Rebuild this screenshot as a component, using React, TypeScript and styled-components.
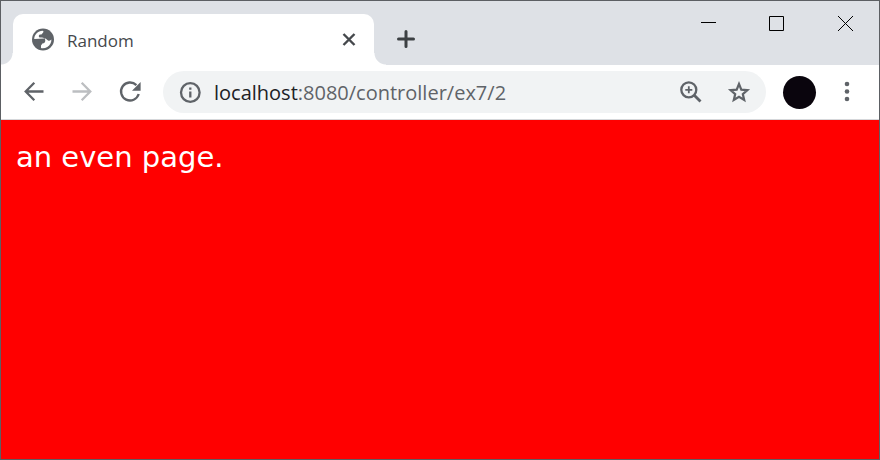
import React from "react";
import styled, { createGlobalStyle } from "styled-components";

const colors = {
  frame: "#5c5f63",
  strip: "#dee1e6",
  icon: "#5f6368",
  field: "#f1f3f4",
  ink: "#202124",
};

const GlobalStyle = createGlobalStyle`
  *, *::before, *::after { box-sizing: border-box; }
  body { margin: 0; font-family: "Open Sans", "Noto Sans", sans-serif; }
  button { border: 0; padding: 0; background: transparent; color: inherit; font: inherit; }
  svg { display: block; }
`;

const BrowserWindow = styled.div`
  display: flex;
  flex-direction: column;
  min-height: 100vh;
  border: 1px solid ${colors.frame};
  background: #fff;
`;

const TitleBar = styled.header`
  display: flex;
  align-items: flex-end;
  height: 64px;
  padding-left: 12px;
  background: ${colors.strip};
`;

const Tab = styled.div`
  position: relative;
  display: flex;
  align-items: center;
  flex: 0 1 361px;
  height: 51px;
  padding: 0 16px 0 18px;
  border-radius: 10px 10px 0 0;
  background: #fff;

  &::before,
  &::after {
    content: "";
    position: absolute;
    bottom: 0;
    width: 12px;
    height: 12px;
  }
  &::before {
    right: 100%;
    background: radial-gradient(circle at 0 0, transparent 11px, #fff 12px);
  }
  &::after {
    left: 100%;
    background: radial-gradient(circle at 100% 0, transparent 11px, #fff 12px);
  }
`;

const TabTitle = styled.span`
  flex: 1;
  margin-left: 12px;
  padding-top: 2px;
  font-size: 17px;
  line-height: 24px;
  color: #45484c;
`;

const IconButton = styled.button<{ $size: number; $tone?: string }>`
  display: flex;
  align-items: center;
  justify-content: center;
  flex: none;
  width: ${(p) => p.$size}px;
  height: ${(p) => p.$size}px;
  color: ${(p) => p.$tone ?? colors.icon};
`;

const NewTab = styled(IconButton)`
  margin: 0 0 10px 16px;
`;

const WindowControls = styled.div`
  display: flex;
  align-self: flex-start;
  margin-left: auto;
`;

const WindowButton = styled.button`
  display: flex;
  align-items: center;
  justify-content: center;
  width: 69px;
  height: 44px;
  padding-left: 2px;
  color: #000;
`;

const Toolbar = styled.nav`
  display: flex;
  align-items: center;
  height: 55px;
  padding: 0 16px 0 17px;
  border-bottom: 1px solid #d5d7da;
`;

const History = styled.div`
  display: flex;
  gap: 16px;
`;

const AddressBar = styled.div`
  display: flex;
  align-items: center;
  flex: 1;
  height: 42px;
  margin: 0 17px;
  padding: 0 11px;
  border-radius: 21px;
  background: ${colors.field};
`;

const Address = styled.a`
  flex: 1;
  margin-left: 8px;
  padding-top: 2px;
  font-size: 20px;
  line-height: 28px;
  color: ${colors.icon};
  text-decoration: none;
`;

const Host = styled.span`
  color: ${colors.ink};
`;

const AddressActions = styled.div`
  display: flex;
  gap: 16px;
`;

const Avatar = styled.button`
  flex: none;
  width: 33px;
  height: 33px;
  margin-right: 15px;
  border-radius: 50%;
  background: #0a050d;
`;

const Page = styled.main`
  flex: 1;
  padding: 17px 15px;
  background: #f00;
`;

const Message = styled.p`
  margin: 0;
  font-family: "DejaVu Sans", Verdana, sans-serif;
  font-size: 29px;
  line-height: 40px;
  color: #fff;
`;

const LineIcon = ({ children }: { children: React.ReactNode }) => (
  <svg
    width="26"
    height="26"
    viewBox="0 0 26 26"
    fill="none"
    stroke="currentColor"
    strokeWidth="2.3"
    aria-hidden="true"
  >
    {children}
  </svg>
);

const GlobeIcon = () => (
  <svg width="24" height="24" viewBox="0 0 24 24" aria-hidden="true">
    <circle cx="12" cy="11.500" r="11" fill={colors.icon} />
    <path
      fill="#fff"
      d="M3.200 10.900C3.400 6.500 6.900 3 11.500 2.700c1.100.2 1.200 1.200.6 1.900l-1 1.200c-.4.600-.9.800-1.600.8-1 0-1.700.7-1.700 1.600 0 .8.600 1.400 1.500 1.400h1.500c2 0 3.500 1.300 3.500 3 0 1.700-1.200 3-2.800 3-1 0-1.600.6-1.600 1.500v2.900c3.800.9 7.900-1 9.600-4.500.7-1.300.9-2.600.9-3.900-.9 1-2.200 1.300-3.300.8-.9-.4-1.300-1.100-1.900-1.500-.6-.4-1.500-.5-2.300-.4"
    />
    <path
      fill={colors.icon}
      d="M2.500 11.300H7c1.700 0 2.700.9 2.700 2.200 0 .7.300 1 .9 1.200.7.200.8.700.5 1.300-.5.800-1.200 1.200-1.200 2.200v2.600L5 19z"
    />
  </svg>
);

const BackIcon = () => (
  <LineIcon>
    <path d="M22.500 12.500H5M13.300 3.800L4.700 12.500l8.600 8.700" />
  </LineIcon>
);

const ForwardIcon = () => (
  <LineIcon>
    <path d="M3.500 12.500H21M12.700 3.800l8.600 8.700-8.600 8.700" />
  </LineIcon>
);

const ReloadIcon = () => (
  <LineIcon>
    <path d="M21.700 15A9 9 0 1 1 19.400 6.100" />
    <path d="M23.600 3.100v8.600H15z" fill="currentColor" stroke="none" />
  </LineIcon>
);

const InfoIcon = () => (
  <LineIcon>
    <circle cx="13.300" cy="13.500" r="9.300" />
    <path d="M13.300 8.500v2.300M13.300 12.500v6" />
  </LineIcon>
);

const ZoomIcon = () => (
  <LineIcon>
    <circle cx="10.800" cy="10.800" r="7.500" />
    <path d="M16 16l6.500 6.500" strokeWidth="2.800" />
    <path d="M10.800 7.300v7M7.300 10.800h7" strokeWidth="1.800" />
  </LineIcon>
);

const StarIcon = () => (
  <LineIcon>
    <path
      d="M13 5l2.300 5.600 6.100.5-4.600 4 1.400 5.900-5.200-3.100L7.800 21l1.400-5.900-4.600-4 6.100-.5z"
      strokeWidth="2.200"
    />
  </LineIcon>
);

const MenuIcon = () => (
  <svg width="26" height="26" viewBox="0 0 26 26" fill="currentColor" aria-hidden="true">
    <circle cx="13" cy="5" r="2.300" />
    <circle cx="13" cy="12.500" r="2.300" />
    <circle cx="13" cy="20" r="2.300" />
  </svg>
);

export default function App() {
  return (
    <>
      <GlobalStyle />
      <BrowserWindow>
        <TitleBar>
          <Tab>
            <GlobeIcon />
            <TabTitle>Random</TabTitle>
            <IconButton $size={18} $tone="#45484c" aria-label="Close tab">
              <svg width="18" height="18" viewBox="0 0 18 18" stroke="currentColor" strokeWidth="2.4">
                <path d="M3.500 3l11 11m0-11l-11 11" />
              </svg>
            </IconButton>
          </Tab>
          <NewTab $size={32} $tone="#3c4043" aria-label="New tab">
            <svg width="20" height="20" viewBox="0 0 20 20" stroke="currentColor" strokeWidth="3" strokeLinecap="round">
              <path d="M10 2.500v15M2.500 10h15" />
            </svg>
          </NewTab>
          <WindowControls>
            <WindowButton aria-label="Minimize">
              <svg width="16" height="15" viewBox="0 0 16 15" stroke="currentColor">
                <path d="M1 6.500h15" />
              </svg>
            </WindowButton>
            <WindowButton aria-label="Maximize">
              <svg width="15" height="15" viewBox="0 0 15 15" stroke="currentColor" fill="none">
                <path d="M.5.500h14v14H.5z" />
              </svg>
            </WindowButton>
            <WindowButton aria-label="Close">
              <svg width="15" height="15" viewBox="0 0 15 15" stroke="currentColor">
                <path d="M0 0l15 15m0-15L0 15" />
              </svg>
            </WindowButton>
          </WindowControls>
        </TitleBar>
        <Toolbar>
          <History>
            <IconButton $size={32} aria-label="Back"><BackIcon /></IconButton>
            <IconButton $size={32} $tone="#bcbec1" aria-label="Forward"><ForwardIcon /></IconButton>
            <IconButton $size={32} aria-label="Reload"><ReloadIcon /></IconButton>
          </History>
          <AddressBar>
            <IconButton $size={32} aria-label="Site information"><InfoIcon /></IconButton>
            <Address href="http://localhost:8080/controller/ex7/2">
              <Host>localhost</Host>:8080/controller/ex7/2
            </Address>
            <AddressActions>
              <IconButton $size={32} aria-label="Zoom"><ZoomIcon /></IconButton>
              <IconButton $size={32} aria-label="Bookmark"><StarIcon /></IconButton>
            </AddressActions>
          </AddressBar>
          <Avatar aria-label="Profile" />
          <IconButton $size={32} aria-label="Menu"><MenuIcon /></IconButton>
        </Toolbar>
        <Page>
          <Message>an even page.</Message>
        </Page>
      </BrowserWindow>
    </>
  );
}
